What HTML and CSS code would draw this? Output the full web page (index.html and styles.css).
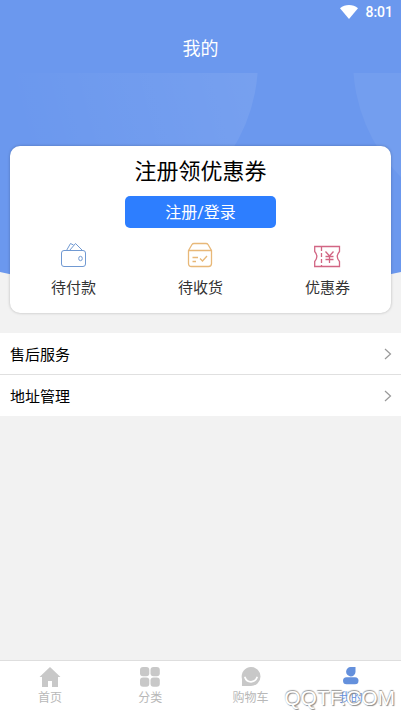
FILE: index.html
```html
<!DOCTYPE html>
<html lang="zh-CN">
<head>
<meta charset="utf-8">
<meta name="viewport" content="width=device-width, initial-scale=1">
<title>我的</title>
<link rel="stylesheet" href="styles.css">
</head>
<body>
<header class="top">
  <div class="status">
    <svg width="18" height="14" viewBox="0 0 18 14" aria-hidden="true"><path d="M0 3.2C5 -1 13 -1 18 3.2L9 14Z" fill="#fff"/></svg>
    <span>8:01</span>
  </div>
  <h1 class="title">我的</h1>
</header>
<main class="main">
  <section class="hero">
    <svg class="banner" viewBox="0 0 401 222" preserveAspectRatio="none" aria-hidden="true">
      <defs>
        <linearGradient id="glow" gradientUnits="userSpaceOnUse" x1="20" y1="60" x2="250" y2="0">
          <stop offset="0" stop-color="#fff" stop-opacity="0"/>
          <stop offset="1" stop-color="#fff" stop-opacity=".08"/>
        </linearGradient>
        <clipPath id="arc"><path d="M0 0H401V199Q200 245 0 199Z"/></clipPath>
      </defs>
      <g clip-path="url(#arc)">
        <rect width="401" height="222" fill="#6b98ee"/>
        <circle cx="93" cy="-12" r="165" fill="url(#glow)"/>
        <circle cx="518" cy="-12" r="165" fill="#fff" fill-opacity=".06"/>
      </g>
    </svg>
    <div class="card">
      <h2 class="promo">注册领优惠券</h2>
      <button class="login" type="button">注册/登录</button>
      <nav class="orders" aria-label="订单">
        <a class="order" href="#pay">
          <svg width="28" height="26" viewBox="0 0 28 26" fill="none" stroke="#7099d2" aria-hidden="true">
            <rect x="1.5" y="8.5" width="24" height="16" rx="2.5"/>
            <path d="M6.500 8.500L10.500 1.500L13.500 3M9.500 8.500L15.500 1.500L22.500 8.500"/>
            <ellipse cx="20.500" cy="16.500" rx="1.800" ry="2.200"/>
          </svg>
          <span>待付款</span>
        </a>
        <a class="order" href="#receive">
          <svg width="28" height="26" viewBox="0 0 28 26" fill="none" stroke="#e8b878" stroke-width="1.300" aria-hidden="true">
            <path d="M1.500 8.500L5 2.500Q5.600 1.500 7 1.500H19Q20.400 1.500 21 2.500L24.500 8.500V21.500Q24.500 24.500 21.500 24.500H4.500Q1.500 24.500 1.500 21.500ZM1.500 8.500H24.500M5.500 15.500H11M5.500 19.500H9M13 16.500L15.500 19L20 14"/>
          </svg>
          <span>待收货</span>
        </a>
        <a class="order" href="#coupon">
          <svg width="28" height="26" viewBox="1 0 28 26" fill="none" stroke="#d26684" stroke-width="1.300" aria-hidden="true">
            <path d="M1.700 4.500H26.500V9.500Q22 14.500 26.500 19.500V24.500H1.700V19.500Q6 14.500 1.700 9.500Z"/>
            <path d="M8.500 5V24" stroke-dasharray="4 2"/>
            <path d="M12.500 9.500L16.500 14L20.500 9.500M16.500 14V21M12.500 14.500H20.500M12.500 17.500H20.500"/>
          </svg>
          <span>优惠券</span>
        </a>
      </nav>
    </div>
  </section>
  <nav class="list" aria-label="服务">
    <a class="row" href="#service"><span>售后服务</span><svg width="8" height="12" viewBox="0 0 8 12" fill="none" stroke="#999" stroke-width="1.200" aria-hidden="true"><path d="M1 1L6.500 6L1 11"/></svg></a>
    <a class="row" href="#address"><span>地址管理</span><svg width="8" height="12" viewBox="0 0 8 12" fill="none" stroke="#999" stroke-width="1.200" aria-hidden="true"><path d="M1 1L6.500 6L1 11"/></svg></a>
  </nav>
</main>
<footer class="footer">
  <nav class="tabs" aria-label="主导航">
    <a class="tab" href="#home">
      <svg width="22" height="20" viewBox="0 0 22 20" fill="#c8c8c8" aria-hidden="true"><path d="M11 0L21.500 10H19V20H13V14H9V20H3V10H.5Z"/></svg>
      <span>首页</span>
    </a>
    <a class="tab" href="#category">
      <svg width="20" height="20" viewBox="0 0 20 20" fill="#c8c8c8" aria-hidden="true"><rect width="9.300" height="9.300" rx="3"/><rect x="10.500" width="9.300" height="9.300" rx="3"/><rect y="10.500" width="9.300" height="9.300" rx="3"/><rect x="10.500" y="10.500" width="9.300" height="9.300" rx="3"/></svg>
      <span>分类</span>
    </a>
    <a class="tab" href="#cart">
      <svg width="20" height="20" viewBox="0 0 20 20" aria-hidden="true"><path d="M10 0A9.500 9.500 0 1 1 10 19H2Q.5 19 1 17.500V12A9.500 9.500 0 0 1 10 0Z" fill="#c8c8c8"/><path d="M4 10.500Q5.500 14.800 10 14.800Q14.500 14.800 16 10.500" fill="none" stroke="#fff" stroke-width="1.800" stroke-linecap="round"/></svg>
      <span>购物车</span>
    </a>
    <a class="tab active" href="#mine" aria-current="page">
      <svg width="18" height="20" viewBox="0 0 18 20" fill="#6490dc" aria-hidden="true"><path d="M9 0H13.500V5A4.700 4.700 0 1 1 9 0Z"/><rect x="1" y="10.300" width="15.500" height="7" rx="3.500"/></svg>
      <span>我的</span>
    </a>
  </nav>
  <span class="watermark">QQTF.COM</span>
</footer>
</body>
</html>
```
FILE: styles.css
```css
* {
  box-sizing: border-box;
}

body {
  margin: 0;
  min-height: 100vh;
  display: flex;
  flex-direction: column;
  background: #f2f2f2;
  color: #000;
  font-family: Roboto, "Noto Sans CJK SC", sans-serif;
}

a {
  color: inherit;
  text-decoration: none;
}

svg {
  display: block;
}

.top {
  background: #6b98ee;
  color: #fff;
}

.status {
  display: flex;
  justify-content: flex-end;
  align-items: center;
  gap: 7px;
  height: 24px;
  padding-right: 8px;
  font-size: 14px;
  font-weight: 500;
}

.title {
  margin: 0;
  font-size: 18px;
  font-weight: 400;
  line-height: 49px;
  text-align: center;
}

.main {
  flex: 1;
}

.hero {
  position: relative;
  padding: 73px 10px 0;
}

.banner {
  position: absolute;
  top: 0;
  left: 0;
  width: 100%;
  height: 222px;
}

.card {
  position: relative;
  display: flex;
  flex-direction: column;
  align-items: center;
  padding: 10px 0 12px;
  border-radius: 10px;
  background: #fff;
  box-shadow: 0 0 3px rgba(0, 0, 0, 0.25);
}

.promo {
  margin: 0 0 8px;
  font-size: 22px;
  font-weight: 400;
  line-height: 32px;
}

.login {
  width: 151px;
  height: 32px;
  padding: 0 0 2px;
  border: 0;
  border-radius: 5px;
  background: #2d7eff;
  color: #fff;
  font: inherit;
  font-size: 16px;
}

.orders {
  display: grid;
  grid-template-columns: repeat(3, 1fr);
  width: 100%;
  margin-top: 14px;
}

.order {
  display: flex;
  flex-direction: column;
  align-items: center;
  gap: 8px;
  color: #333;
  font-size: 15px;
  line-height: 25px;
}

.list {
  margin-top: 20px;
  background: #fff;
}

.row {
  display: flex;
  justify-content: space-between;
  align-items: center;
  height: 41px;
  padding: 0 9px 0 10px;
  font-size: 15px;
  line-height: 24px;
}

.row span {
  padding-top: 2px;
}

.row + .row {
  height: 42px;
  border-top: 1px solid #e0e0e0;
}

.footer {
  position: relative;
}

.tabs {
  display: grid;
  grid-template-columns: repeat(4, 1fr);
  height: 50px;
  border-top: 1px solid #dedede;
  background: #fff;
}

.tab {
  display: flex;
  flex-direction: column;
  align-items: center;
  gap: 2px;
  padding-top: 6px;
  color: #b8b8b8;
  font-size: 12px;
  line-height: 18px;
}

.active {
  color: #6490dc;
}

.watermark {
  position: absolute;
  right: 6px;
  bottom: 0;
  color: #fff;
  font-family: "Liberation Sans", sans-serif;
  font-size: 21px;
  line-height: 24px;
  text-shadow: 0 -1px 1px #999, 1px 1px 1px #888;
}
```
